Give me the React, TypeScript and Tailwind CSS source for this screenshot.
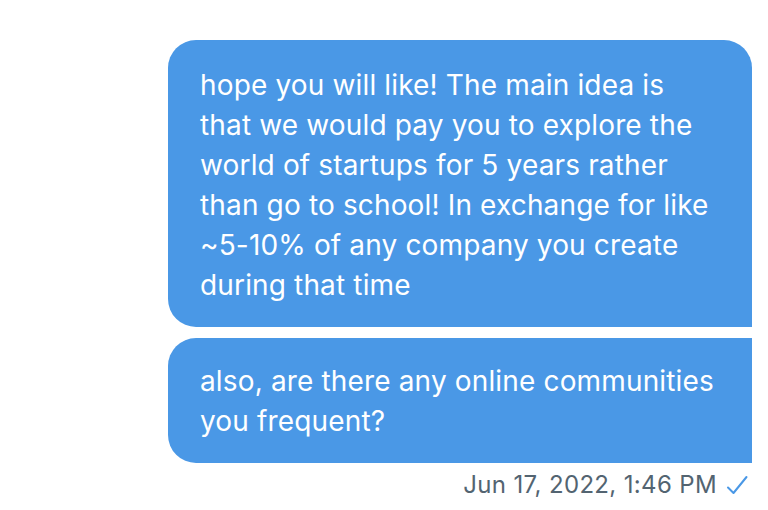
const firstLines = [
  "hope you will like! The main idea is",
  "that we would pay you to explore the",
  "world of startups for 5 years rather",
  "than go to school! In exchange for like",
  "~5-10% of any company you create",
  "during that time",
];

const secondLines = ["also, are there any online communities", "you frequent?"];

function Bubble({ lines, className }: { lines: string[]; className: string }) {
  return (
    <div
      className={`w-[584px] bg-[#4a98e6] px-8 text-[28px] leading-[40px] tracking-[0.15px] text-white ${className}`}
    >
      {lines.map((l) => (
        <div key={l} className="whitespace-nowrap">
          {l}
        </div>
      ))}
    </div>
  );
}

export default function App() {
  return (
    <div
      className="flex h-[510px] w-[768px] flex-col items-end bg-white pr-4 pt-10"
      style={{ fontFamily: "Inter, sans-serif" }}
    >
      <Bubble
        lines={firstLines}
        className="rounded-l-[28px] rounded-tr-[28px] pb-[22px] pt-[25px]"
      />
      <Bubble lines={secondLines} className="mt-[11px] rounded-l-[28px] pb-[22px] pt-[23px]" />
      <div className="mt-[7px] flex items-center gap-[9px] pr-1 text-[24px] leading-[30px] tracking-[0.35px] text-[#536471]">
        <span>Jun 17, 2022, 1:46 PM</span>
        <svg width="22" height="20" viewBox="0 0 22 20" fill="none">
          <path d="M2 12.5 L7.5 18 L20.5 2" stroke="#4a98e6" strokeWidth="2" strokeLinecap="round" strokeLinejoin="round" />
        </svg>
      </div>
    </div>
  );
}
